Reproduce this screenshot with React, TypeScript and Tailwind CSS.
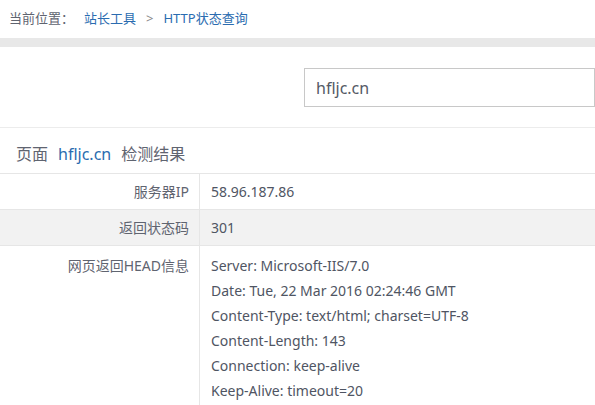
const headers = [
  'Server: Microsoft-IIS/7.0',
  'Date: Tue, 22 Mar 2016 02:24:46 GMT',
  'Content-Type: text/html; charset=UTF-8',
  'Content-Length: 143',
  'Connection: keep-alive',
  'Keep-Alive: timeout=20',
];

export default function App() {
  return (
    <div
      className="w-[595px] h-[405px] overflow-hidden bg-white text-[#5f6470]"
      style={{ fontFamily: '"Noto Sans", "Noto Sans CJK SC", sans-serif' }}
    >
      {/* 面包屑 */}
      <div className="h-[38px] flex items-center pl-[9px] text-[13px]">
        <span>当前位置：</span>
        <a className="ml-[10px] text-[#2b6cb0]">站长工具</a>
        <span className="mx-[10px] text-[#888]">&gt;</span>
        <a className="text-[#2b6cb0]">HTTP状态查询</a>
      </div>
      <div className="h-[9px] bg-[#e8e8e8]" />

      {/* 查询框 */}
      <div className="h-[81px] border-b border-[#ececec] pt-[21px] pl-[304px]">
        <div className="h-[39px] border border-[#c8c8c8] flex items-center pl-[11px] text-[16px] text-[#555a66]">
          hfljc.cn
        </div>
      </div>

      {/* 结果 */}
      <div className="h-[46px] flex items-end pb-[7px] pl-[16px] text-[16px] border-b border-[#e6e6e6]">
        <span>页面</span>
        <span className="mx-[10px] text-[#2b6cb0]">hfljc.cn</span>
        <span>检测结果</span>
      </div>

      <div className="text-[14px]">
        <div className="flex h-[36px] border-b border-[#e6e6e6]">
          <div className="w-[200px] border-r border-[#e6e6e6] flex items-center justify-end pr-[10px]">服务器IP</div>
          <div className="flex items-center pl-[11px] text-[#4f5563]">58.96.187.86</div>
        </div>
        <div className="flex h-[36px] border-b border-[#e6e6e6] bg-[#f2f2f2]">
          <div className="w-[200px] border-r border-[#e6e6e6] flex items-center justify-end pr-[10px]">返回状态码</div>
          <div className="flex items-center pl-[11px] text-[#4f5563]">301</div>
        </div>
        <div className="flex">
          <div className="w-[200px] border-r border-[#e6e6e6] flex justify-end pr-[10px] pt-[7px] leading-[25px]">
            网页返回HEAD信息
          </div>
          <div className="pl-[11px] pt-[7px] leading-[25px] text-[#4f5563] pb-[10px]">
            {headers.map((h) => (
              <div key={h}>{h}</div>
            ))}
          </div>
        </div>
      </div>
    </div>
  );
}
